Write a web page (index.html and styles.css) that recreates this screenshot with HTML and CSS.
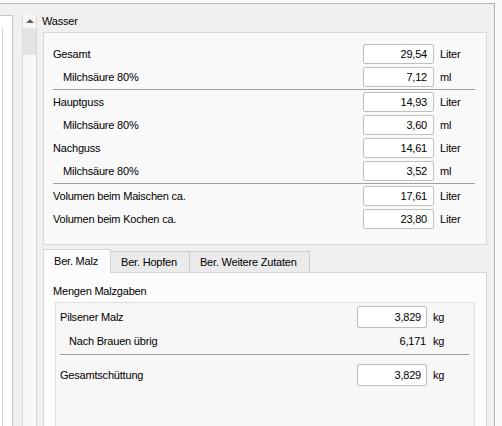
FILE: index.html
```html
<!DOCTYPE HTML>
<html>

<head>
  <meta charset="UTF-8">
  <title>Wasser</title>
  <link rel="stylesheet" href="styles.css">
</head>

<body>
  <div class="frame">
    <div class="side">
      <div class="side-box">
        <div class="side-line"></div>
      </div>
    </div>
    <div class="scroll">
      <div class="scroll-up"><span class="arrow"></span></div>
      <div class="scroll-thumb"></div>
    </div>

    <div class="main">
      <div class="caption">Wasser</div>
      <div class="group">
        <div class="row"><span class="label">Gesamt</span><span class="field">29,54</span><span class="unit">Liter</span></div>
        <div class="row sub"><span class="label">Milchsäure 80%</span><span class="field">7,12</span><span class="unit">ml</span></div>
        <div class="sep"></div>
        <div class="row"><span class="label">Hauptguss</span><span class="field">14,93</span><span class="unit">Liter</span></div>
        <div class="row sub"><span class="label">Milchsäure 80%</span><span class="field">3,60</span><span class="unit">ml</span></div>
        <div class="row"><span class="label">Nachguss</span><span class="field">14,61</span><span class="unit">Liter</span></div>
        <div class="row sub"><span class="label">Milchsäure 80%</span><span class="field">3,52</span><span class="unit">ml</span></div>
        <div class="sep"></div>
        <div class="row"><span class="label">Volumen beim Maischen ca.</span><span class="field">17,61</span><span class="unit">Liter</span></div>
        <div class="row"><span class="label">Volumen beim Kochen ca.</span><span class="field">23,80</span><span class="unit">Liter</span></div>
      </div>

      <div class="tabs">
        <div class="tab on">Ber. Malz</div>
        <div class="tab">Ber. Hopfen</div>
        <div class="tab">Ber. Weitere Zutaten</div>
      </div>
      <div class="pane">
        <div class="caption">Mengen Malzgaben</div>
        <div class="inner">
          <div class="row tall"><span class="label">Pilsener Malz</span><span class="field">3,829</span><span class="unit">kg</span></div>
          <div class="row tall sub"><span class="label">Nach Brauen übrig</span><span class="value">6,171</span><span class="unit">kg</span></div>
          <div class="sep"></div>
          <div class="row tall"><span class="label">Gesamtschüttung</span><span class="field">3,829</span><span class="unit">kg</span></div>
        </div>
      </div>
    </div>
  </div>
</body>

</html>
```

FILE: styles.css
```css
body {
  margin: 0;
  background: #fafafa;
  font-family: "Liberation Sans", Arial, sans-serif;
  font-size: 11px;
  letter-spacing: -0.2px;
  color: #000;
}

/* outer window frame */
.frame {
  display: flex;
  width: 494px;
  height: 422px;
  margin-top: 3px;
  border-top: 1px solid #b4b4b4;
  border-right: 1px solid #b4b4b4;
  background: #f0f0f0;
  overflow: hidden;
}

.side {
  flex: none;
  width: 22px;
}

.side-box {
  width: 12px;
  height: 420px;
  margin-top: 11px;
  border-top: 1px solid #c8c8c8;
  border-right: 1px solid #c8c8c8;
  background: #fff;
}

.side-line {
  height: 400px;
  margin: 12px 0 0 2px;
  border-left: 1px solid #d6d6d6;
}

/* scrollbar strip */
.scroll {
  flex: none;
  width: 13px;
  margin-top: 11px;
  border-left: 1px solid #d8d8d8;
  border-right: 1px solid #d8d8d8;
  background: #f7f7f7;
}

.scroll-up {
  display: flex;
  align-items: center;
  justify-content: center;
  height: 12px;
}

.arrow {
  width: 0;
  height: 0;
  border-left: 4px solid transparent;
  border-right: 4px solid transparent;
  border-bottom: 4px solid #606060;
}

.scroll-thumb {
  height: 27px;
  margin-top: 1px;
  background: #e4e4e4;
}

/* content */
.main {
  flex: 1;
  padding: 9px 7px 0 6px;
}

.caption {
  line-height: 16px;
  margin: 0 0 3px -1px;
}

.group {
  padding: 11px 11px 12px 9px;
  border: 1px solid #dadada;
  background: #f9f9f9;
}

.row {
  display: flex;
  align-items: center;
  height: 20px;
  margin-bottom: 3px;
}

.label {
  flex: 1;
  white-space: nowrap;
}

.sub .label {
  padding-left: 10px;
}

.field {
  box-sizing: border-box;
  width: 71px;
  height: 20px;
  padding-right: 6px;
  border: 1px solid #bfbfbf;
  border-radius: 2px;
  background: #fff;
  line-height: 18px;
  text-align: right;
}

.unit {
  width: 35px;
  margin-left: 6px;
}

.sep {
  height: 1px;
  margin: -1px 0 2px;
  background: #a0a0a0;
}

/* tabs */
.tabs {
  display: flex;
  align-items: flex-end;
  height: 23px;
  margin-top: 4px;
}

.tab {
  box-sizing: border-box;
  height: 21px;
  padding: 0 12px 0 10px;
  margin-left: -1px;
  border: 1px solid #cdcdcd;
  border-bottom: 0;
  background: #ebebeb;
  line-height: 20px;
  white-space: nowrap;
}

.tab:first-child {
  margin-left: 0;
}

.tab.on {
  position: relative;
  z-index: 1;
  height: 24px;
  margin-bottom: -1px;
  border-color: #d6d6d6;
  background: #fcfcfc;
  line-height: 22px;
}

.pane {
  height: 200px;
  padding: 10px 11px 0 11px;
  border: 1px solid #d6d6d6;
  background: #fcfcfc;
}

.pane .caption {
  margin-left: -2px;
}

.inner {
  height: 150px;
  padding: 3px 5px 0 4px;
  border: 1px solid #dedede;
  background: #f7f7f7;
}

.row.tall {
  height: 22px;
  margin-bottom: 2px;
}

.inner .sub .label {
  padding-left: 9px;
}

.inner .field {
  width: 70px;
  height: 22px;
  padding-right: 5px;
  line-height: 20px;
}

.value {
  box-sizing: border-box;
  width: 70px;
  padding-right: 1px;
  text-align: right;
}

.inner .unit {
  width: 36px;
}

.inner .sep {
  margin: 2px 0 9px;
}
```
